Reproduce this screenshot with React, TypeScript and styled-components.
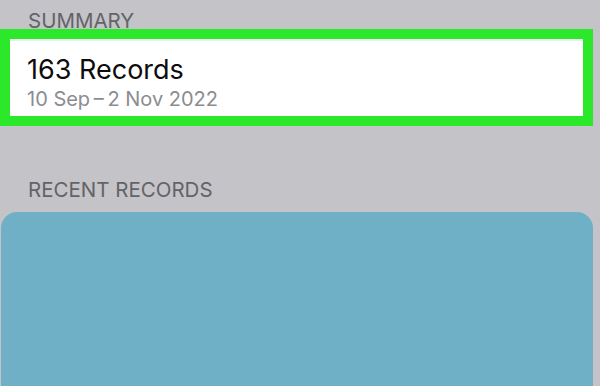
import styled, { createGlobalStyle } from "styled-components";

const GlobalStyle = createGlobalStyle`
  html, body {
    margin: 0;
    padding: 0;
    background: #c4c4c8;
    font-family: Inter, "Noto Sans", "Liberation Sans", sans-serif;
  }
  #root {
    height: 386px;
    overflow: hidden;
  }
`;

const Page = styled.div`
  display: flex;
  flex-direction: column;
  height: 386px;
  padding-right: 7px;
  box-sizing: border-box;
  background: #c4c4c8;
`;

const SectionHeader = styled.div<{ $top: number }>`
  padding-left: 28px;
  padding-top: ${(p) => p.$top}px;
  font-size: 20.5px;
  line-height: 16px;
  color: #636367;
  text-transform: uppercase;
`;

const SummaryCard = styled.div`
  height: 97px;
  box-sizing: border-box;
  border: 10px solid #2be82b;
  background: #ffffff;
  box-shadow: inset 0 2px 0 #ececf1;
  display: flex;
  flex-direction: column;
  padding: 16px 0 0 17px;
  gap: 3px;
`;

const Count = styled.div`
  font-size: 27px;
  line-height: 30px;
  color: #0c0c0e;
`;

const Range = styled.div`
  font-size: 20px;
  line-height: 22px;
  color: #8c8c90;
`;

const RecordsCard = styled.div`
  flex: 1;
  margin-top: 14px;
  margin-left: 1px;
  background: #6fb0c6;
  border-radius: 16px 16px 0 0;
`;

export default function App() {
  return (
    <>
      <GlobalStyle />
      <Page>
        <SectionHeader $top={13}>Summary</SectionHeader>
        <SummaryCard>
          <Count>163 Records</Count>
          <Range>10 Sep{"\u2009–\u2009"}2 Nov 2022</Range>
        </SummaryCard>
        <SectionHeader $top={56}>Recent Records</SectionHeader>
        <RecordsCard />
      </Page>
    </>
  );
}
